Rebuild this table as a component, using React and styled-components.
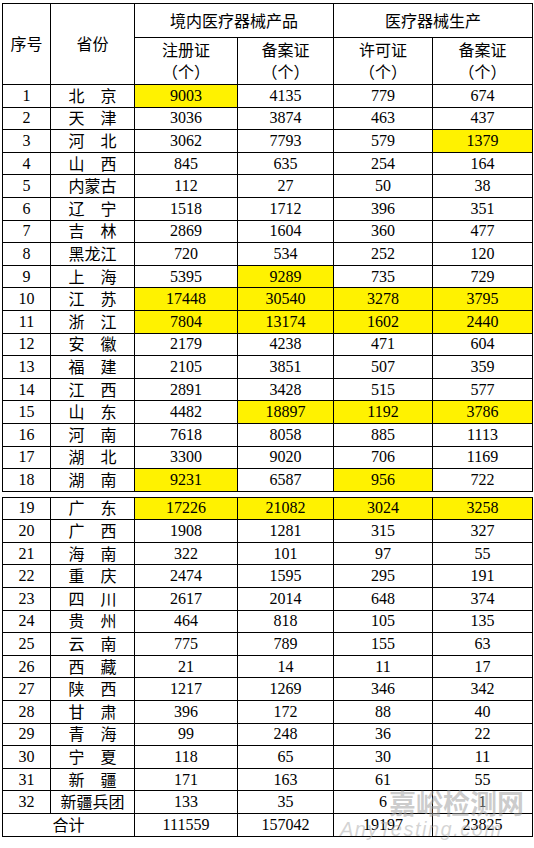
import React from "react";
import styled, { createGlobalStyle } from "styled-components";

const GlobalStyle = createGlobalStyle`
  html, body {
    margin: 0;
    padding: 0;
    background: #ffffff;
  }
`;

const Page = styled.div`
  position: relative;
  width: 534px;
  height: 848px;
  padding: 3px 0 0 2px;
  box-sizing: border-box;
  overflow: hidden;
  font-family: "Liberation Serif", "Noto Sans CJK SC", serif;
  font-size: 16px;
  color: #000;
`;

const Table = styled.table`
  border-collapse: collapse;
  table-layout: fixed;
  width: 531px;
  margin-top: ${({ $gap }) => ($gap ? "5px" : "0")};
`;

const Cell = styled.td`
  border: 1px solid #000;
  padding: 0;
  height: ${({ $h }) => $h || "21.6px"};
  text-align: center;
  vertical-align: middle;
  line-height: ${({ $lh }) => $lh || "16px"};
  white-space: nowrap;
  background: ${({ $hl }) => ($hl ? "#fff200" : "transparent")};
`;

const HeadCell = styled(Cell).attrs({ as: "th" })`
  font-weight: 400;
`;

const Han = styled.span`
  font-family: "Noto Sans CJK SC", sans-serif;
`;

const Mark = styled.div`
  position: absolute;
  left: 389px;
  top: 786px;
  font-family: "Noto Sans CJK SC", sans-serif;
  font-weight: 700;
  font-size: 27px;
  line-height: 34px;
  color: rgba(160, 160, 160, 0.55);
  pointer-events: none;
`;

const MarkSub = styled.div`
  position: absolute;
  left: 340px;
  top: 818px;
  font-family: "Liberation Sans", sans-serif;
  font-style: italic;
  font-size: 20px;
  letter-spacing: 1.5px;
  line-height: 22px;
  color: rgba(170, 170, 170, 0.5);
  pointer-events: none;
`;

const WIDTHS = [48, 84, 103, 96, 99, 100];

// value ending with "*" is highlighted in yellow
const ROWS = [
  ["1", "北　京", "9003*", "4135", "779", "674"],
  ["2", "天　津", "3036", "3874", "463", "437"],
  ["3", "河　北", "3062", "7793", "579", "1379*"],
  ["4", "山　西", "845", "635", "254", "164"],
  ["5", "内蒙古", "112", "27", "50", "38"],
  ["6", "辽　宁", "1518", "1712", "396", "351"],
  ["7", "吉　林", "2869", "1604", "360", "477"],
  ["8", "黑龙江", "720", "534", "252", "120"],
  ["9", "上　海", "5395", "9289*", "735", "729"],
  ["10", "江　苏", "17448*", "30540*", "3278*", "3795*"],
  ["11", "浙　江", "7804*", "13174*", "1602*", "2440*"],
  ["12", "安　徽", "2179", "4238", "471", "604"],
  ["13", "福　建", "2105", "3851", "507", "359"],
  ["14", "江　西", "2891", "3428", "515", "577"],
  ["15", "山　东", "4482", "18897*", "1192*", "3786*"],
  ["16", "河　南", "7618", "8058", "885", "1113"],
  ["17", "湖　北", "3300", "9020", "706", "1169"],
  ["18", "湖　南", "9231*", "6587", "956*", "722"],
];

const ROWS2 = [
  ["19", "广　东", "17226*", "21082*", "3024*", "3258*"],
  ["20", "广　西", "1908", "1281", "315", "327"],
  ["21", "海　南", "322", "101", "97", "55"],
  ["22", "重　庆", "2474", "1595", "295", "191"],
  ["23", "四　川", "2617", "2014", "648", "374"],
  ["24", "贵　州", "464", "818", "105", "135"],
  ["25", "云　南", "775", "789", "155", "63"],
  ["26", "西　藏", "21", "14", "11", "17"],
  ["27", "陕　西", "1217", "1269", "346", "342"],
  ["28", "甘　肃", "396", "172", "88", "40"],
  ["29", "青　海", "99", "248", "36", "22"],
  ["30", "宁　夏", "118", "65", "30", "11"],
  ["31", "新　疆", "171", "163", "61", "55"],
  ["32", "新疆兵团", "133", "35", "6", "1"],
];

const Cols = () => (
  <colgroup>
    {WIDTHS.map((w, i) => (
      <col key={i} style={{ width: w }} />
    ))}
  </colgroup>
);

const DataRow = ({ row }) => (
  <tr>
    <Cell>{row[0]}</Cell>
    <Cell>
      <Han>{row[1]}</Han>
    </Cell>
    {row.slice(2).map((v, i) => {
      const hl = v.endsWith("*");
      return (
        <Cell key={i} $hl={hl}>
          {hl ? v.slice(0, -1) : v}
        </Cell>
      );
    })}
  </tr>
);

const SubHead = ({ label }) => (
  <HeadCell $h="46px" $lh="20px">
    <Han>
      {label}
      <br />
      （个）
    </Han>
  </HeadCell>
);

export default function App() {
  return (
    <>
      <GlobalStyle />
      <Page>
        <Table>
          <Cols />
          <thead>
            <tr>
              <HeadCell rowSpan={2}>
                <Han>序号</Han>
              </HeadCell>
              <HeadCell rowSpan={2}>
                <Han>省份</Han>
              </HeadCell>
              <HeadCell colSpan={2} $h="33px">
                <Han>境内医疗器械产品</Han>
              </HeadCell>
              <HeadCell colSpan={2} $h="33px">
                <Han>医疗器械生产</Han>
              </HeadCell>
            </tr>
            <tr>
              <SubHead label="注册证" />
              <SubHead label="备案证" />
              <SubHead label="许可证" />
              <SubHead label="备案证" />
            </tr>
          </thead>
          <tbody>
            {ROWS.map((r) => (
              <DataRow key={r[0]} row={r} />
            ))}
          </tbody>
        </Table>
        <Table $gap>
          <Cols />
          <tbody>
            {ROWS2.map((r) => (
              <DataRow key={r[0]} row={r} />
            ))}
            <tr>
              <Cell colSpan={2}>
                <Han>合计</Han>
              </Cell>
              <Cell>111559</Cell>
              <Cell>157042</Cell>
              <Cell>19197</Cell>
              <Cell>23825</Cell>
            </tr>
          </tbody>
        </Table>
        <Mark>嘉峪检测网</Mark>
        <MarkSub>AnyTesting.com</MarkSub>
      </Page>
    </>
  );
}
